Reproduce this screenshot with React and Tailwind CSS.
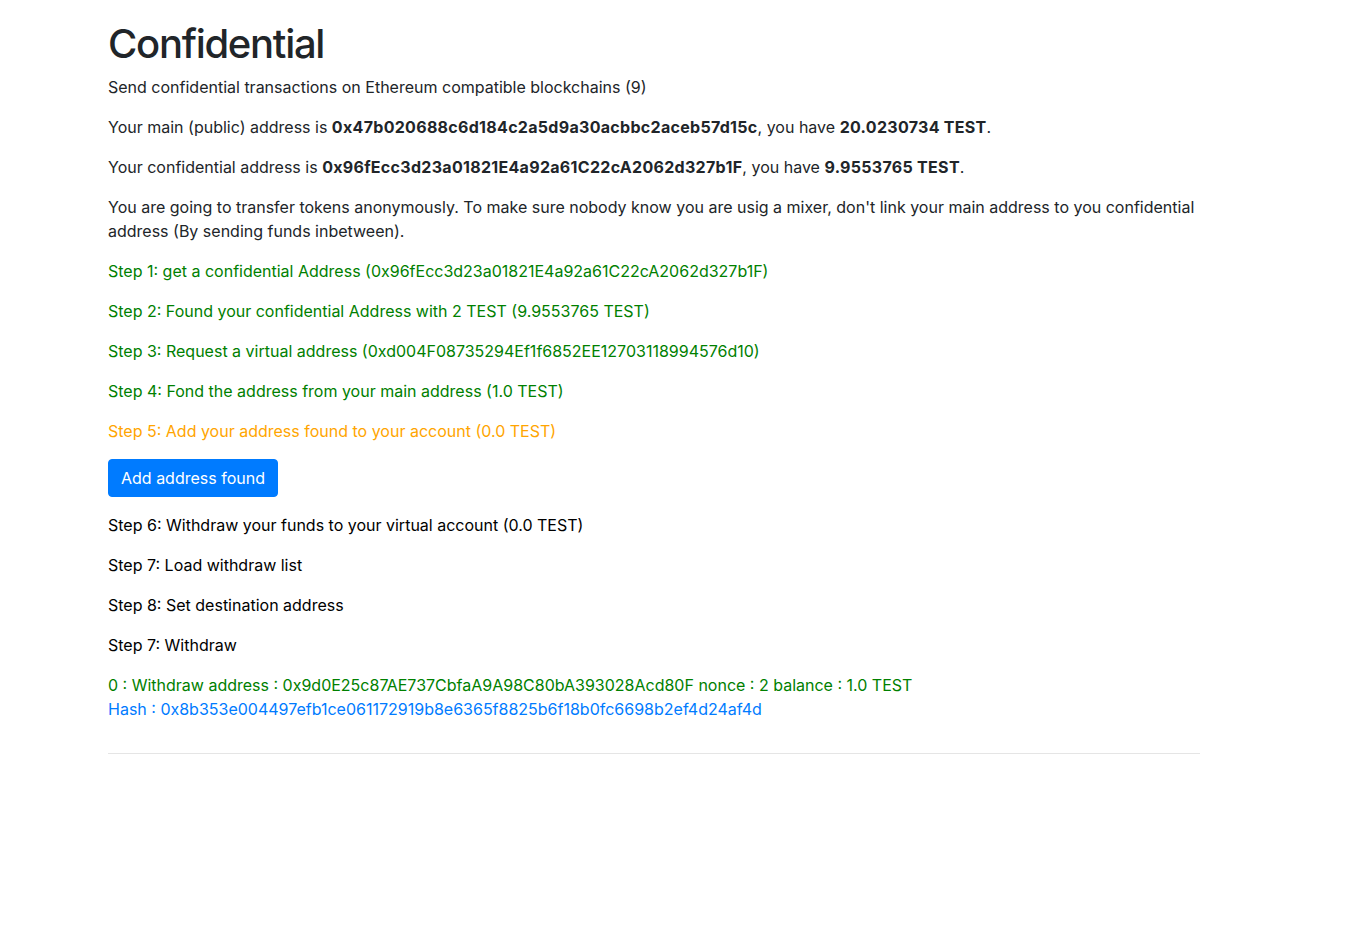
export default function App() {
  const p = "mb-4";
  const b = "font-bold tracking-[0.3px]";
  return (
    <div className="min-h-[936px] bg-white text-[#212529] text-[16px] leading-[24px]" style={{ fontFamily: "Inter, 'Noto Sans', sans-serif" }}>
      <div className="ml-[108px] w-[1092px] pt-[20px]">
        <h1 className="text-[40px] leading-[48px] font-medium mb-[7px] tracking-[-1.3px]">Confidential</h1>
        <p className={p}>Send confidential transactions on Ethereum compatible blockchains (9)</p>
        <p className={p}>
          Your main (public) address is <b className={b}>0x47b020688c6d184c2a5d9a30acbbc2aceb57d15c</b>, you have <b className={b}>20.0230734 TEST</b>.
        </p>
        <p className={p}>
          Your confidential address is <b className={b}>0x96fEcc3d23a01821E4a92a61C22cA2062d327b1F</b>, you have <b className={b}>9.9553765 TEST</b>.
        </p>
        <p className={p}>
          You are going to transfer tokens anonymously. To make sure nobody know you are usig a mixer, don't link your main address to you confidential address (By sending funds inbetween).
        </p>
        <p className={`${p} text-[#008000]`}>Step 1: get a confidential Address (0x96fEcc3d23a01821E4a92a61C22cA2062d327b1F)</p>
        <p className={`${p} text-[#008000]`}>Step 2: Found your confidential Address with 2 TEST (9.9553765 TEST)</p>
        <p className={`${p} text-[#008000]`}>Step 3: Request a virtual address (0xd004F08735294Ef1f6852EE12703118994576d10)</p>
        <p className={`${p} text-[#008000]`}>Step 4: Fond the address from your main address (1.0 TEST)</p>
        <p className={`${p} text-[#FFA500]`}>Step 5: Add your address found to your account (0.0 TEST)</p>
        <div className="mb-4">
          <button className="bg-[#007bff] text-white rounded-[4px] px-[12px] py-[6px] border border-[#007bff] leading-[24px]">Add address found</button>
        </div>
        <p className={`${p} text-black`}>Step 6: Withdraw your funds to your virtual account (0.0 TEST)</p>
        <p className={`${p} text-black`}>Step 7: Load withdraw list</p>
        <p className={`${p} text-black`}>Step 8: Set destination address</p>
        <p className={`${p} text-black`}>Step 7: Withdraw</p>
        <div>
          <div className="text-[#008000]">0 : Withdraw address : 0x9d0E25c87AE737CbfaA9A98C80bA393028Acd80F nonce : 2 balance : 1.0 TEST</div>
          <div className="text-[#007bff]">Hash : 0x8b353e004497efb1ce061172919b8e6365f8825b6f18b0fc6698b2ef4d24af4d</div>
        </div>
        <hr className="mt-8 mb-4 border-0 border-t border-[rgba(0,0,0,0.1)]" />
      </div>
    </div>
  );
}
